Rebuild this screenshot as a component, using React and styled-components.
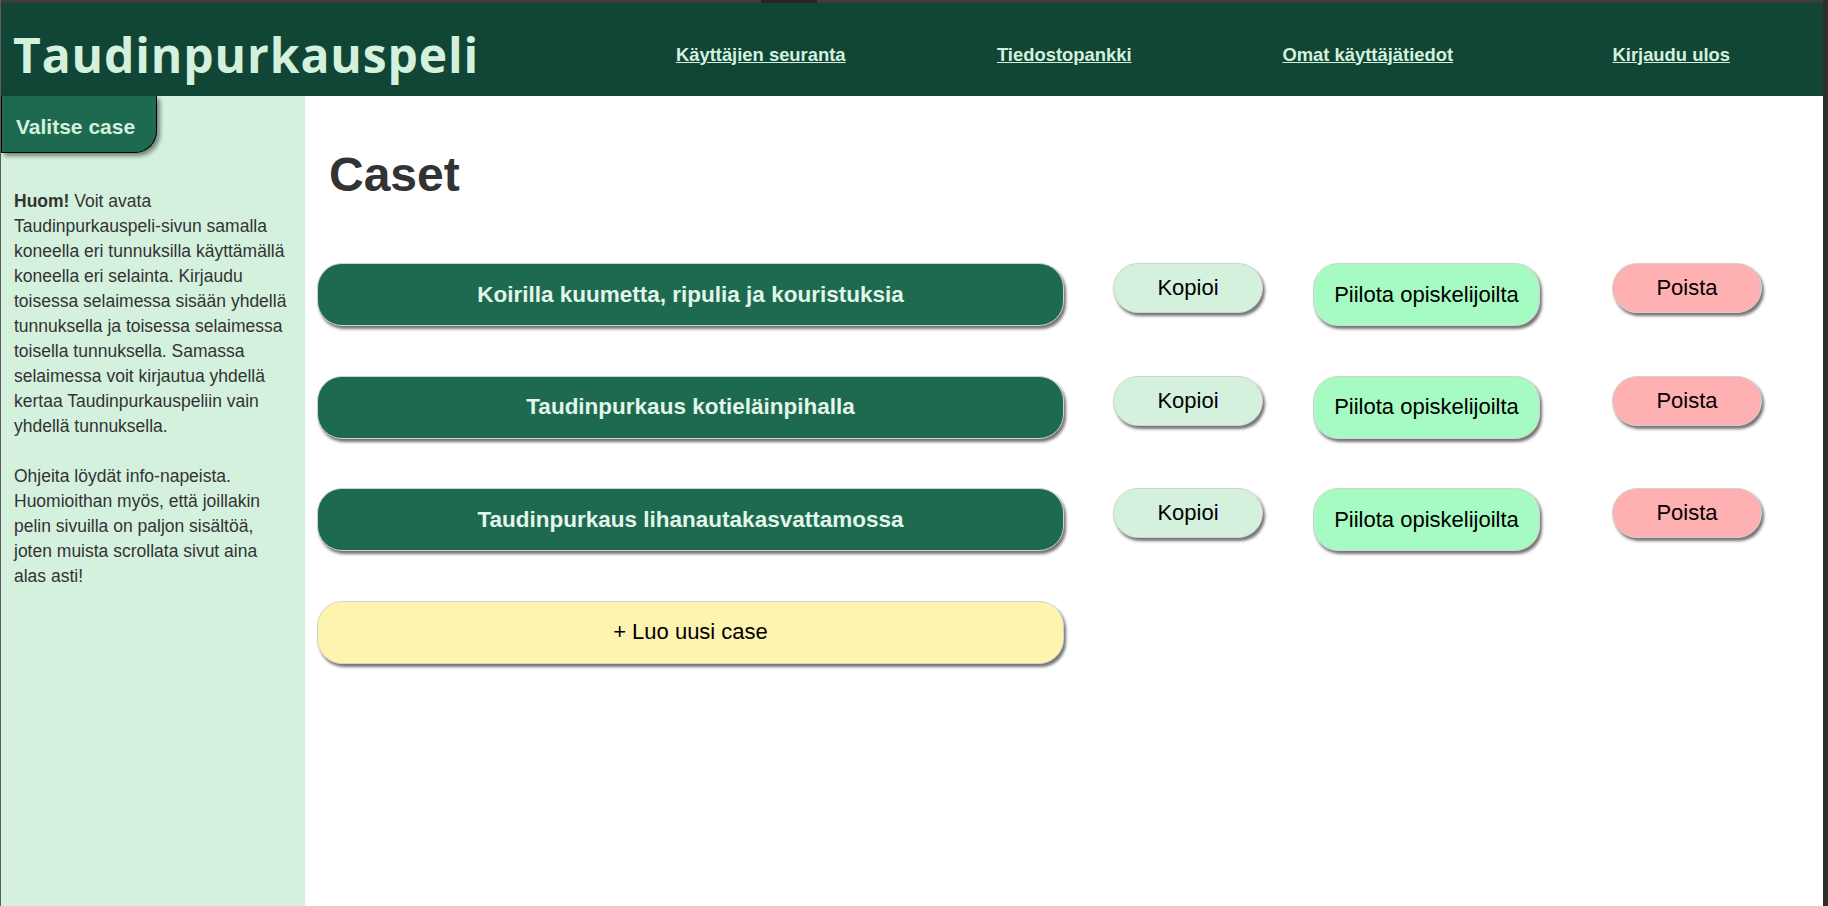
import React from 'react'
import styled, { createGlobalStyle } from 'styled-components'

const GlobalStyle = createGlobalStyle`
  html, body {
    margin: 0;
    padding: 0;
    height: 100%;
  }
  body {
    font-family: "Liberation Sans", Arial, sans-serif;
    color: #333;
    background: #fff;
  }
  #root {
    height: 100%;
  }
`

const Frame = styled.div`
  height: 906px;
  display: flex;
  flex-direction: column;
  border-left: 1px solid #5c5c5c;
  border-right: 5px solid #2e2e2e;
  box-sizing: border-box;
  overflow: hidden;
`

const TopStrip = styled.div`
  height: 3px;
  background: #3d3d3d;
  display: flex;
  flex-shrink: 0;
`

const StripTab = styled.div`
  margin-left: 760px;
  width: 56px;
  background: #262626;
`

const Header = styled.header`
  height: 93px;
  background: #114536;
  display: flex;
  align-items: center;
  padding-top: 10px;
  box-sizing: border-box;
  flex-shrink: 0;
`

const Title = styled.h1`
  width: 608px;
  margin: 0;
  padding-left: 12px;
  box-sizing: border-box;
  font-family: "Open Sans", "Liberation Sans", sans-serif;
  font-weight: 700;
  font-size: 48px;
  letter-spacing: 0.9px;
  color: #d4f1dd;
`

const Nav = styled.nav`
  flex: 1;
  display: flex;
`

const NavLink = styled.a`
  flex: 1;
  text-align: center;
  color: #d4f1dd;
  font-weight: bold;
  font-size: 18.4px;
  text-decoration: underline;
  cursor: pointer;
`

const Body = styled.div`
  flex: 1;
  display: flex;
  min-height: 0;
`

const Sidebar = styled.aside`
  width: 304px;
  background: #d4f1dd;
  flex-shrink: 0;
`

const SideButton = styled.button`
  display: block;
  width: 156px;
  height: 57px;
  margin: 0;
  padding: 6px 0 0 14px;
  text-align: left;
  background: #1e6a50;
  color: #d4f1dd;
  font-family: "Liberation Sans", Arial, sans-serif;
  font-weight: bold;
  font-size: 21px;
  border: 1px solid #000;
  border-top: none;
  border-radius: 0 0 22px 0;
  box-shadow: 3px 3px 4px rgba(0, 0, 0, 0.45);
`

const Info = styled.p`
  margin: 36px 0 0;
  padding: 0 13px;
  font-size: 17.5px;
  line-height: 25px;
  color: #333;
`

const Strong = styled.strong`
  font-weight: bold;
`

const Main = styled.main`
  flex: 1;
  padding: 51px 12px 0;
`

const Heading = styled.h1`
  margin: 0 0 61px 12px;
  font-size: 48px;
  font-weight: bold;
  color: #333;
  line-height: 55px;
`

const CaseList = styled.div`
  display: flex;
  flex-direction: column;
  gap: 49.5px;
`

const CaseRow = styled.div`
  display: grid;
  grid-template-columns: 796px 200px 299px 150px;
  align-items: start;
`

const Pill = styled.button`
  height: ${p => p.$h || 50}px;
  width: ${p => p.$w}px;
  background: ${p => p.$bg};
  color: ${p => p.$color || '#000'};
  font-family: "Liberation Sans", Arial, sans-serif;
  font-size: ${p => (p.$bold ? 22.5 : 22)}px;
  font-weight: ${p => (p.$bold ? 'bold' : 'normal')};
  border: 1px solid #d2d2d2;
  border-radius: 25px;
  box-shadow: 2px 3px 3px rgba(0, 0, 0, 0.55);
  padding: 0;
  cursor: pointer;
`

const cases = [
  'Koirilla kuumetta, ripulia ja kouristuksia',
  'Taudinpurkaus kotieläinpihalla',
  'Taudinpurkaus lihanautakasvattamossa',
]

export default function App() {
  return (
    <>
      <GlobalStyle />
      <Frame>
        <TopStrip>
          <StripTab />
        </TopStrip>
        <Header>
          <Title>Taudinpurkauspeli</Title>
          <Nav>
            <NavLink>Käyttäjien seuranta</NavLink>
            <NavLink>Tiedostopankki</NavLink>
            <NavLink>Omat käyttäjätiedot</NavLink>
            <NavLink>Kirjaudu ulos</NavLink>
          </Nav>
        </Header>
        <Body>
          <Sidebar>
            <SideButton>Valitse case</SideButton>
            <Info>
              <Strong>Huom!</Strong> Voit avata Taudinpurkauspeli-sivun samalla koneella eri
              tunnuksilla käyttämällä koneella eri selainta. Kirjaudu toisessa
              selaimessa sisään yhdellä tunnuksella ja toisessa selaimessa toisella
              tunnuksella. Samassa selaimessa voit kirjautua yhdellä kertaa
              Taudinpurkauspeliin vain yhdellä tunnuksella.
              <br />
              <br />
              Ohjeita löydät info-napeista. Huomioithan myös, että joillakin pelin
              sivuilla on paljon sisältöä, joten muista scrollata sivut aina alas
              asti!
            </Info>
          </Sidebar>
          <Main>
            <Heading>Caset</Heading>
            <CaseList>
              {cases.map(name => (
                <CaseRow key={name}>
                  <Pill $w={747} $h={63} $bg="#1e6a50" $color="#e2f6e9" $bold>
                    {name}
                  </Pill>
                  <Pill $w={150} $bg="#d4f1dd">Kopioi</Pill>
                  <Pill $w={227} $h={63} $bg="#a6fbc2">Piilota opiskelijoilta</Pill>
                  <Pill $w={150} $bg="#ffb0b0">Poista</Pill>
                </CaseRow>
              ))}
              <CaseRow>
                <Pill $w={747} $h={63} $bg="#fff3b0">+ Luo uusi case</Pill>
              </CaseRow>
            </CaseList>
          </Main>
        </Body>
      </Frame>
    </>
  )
}
